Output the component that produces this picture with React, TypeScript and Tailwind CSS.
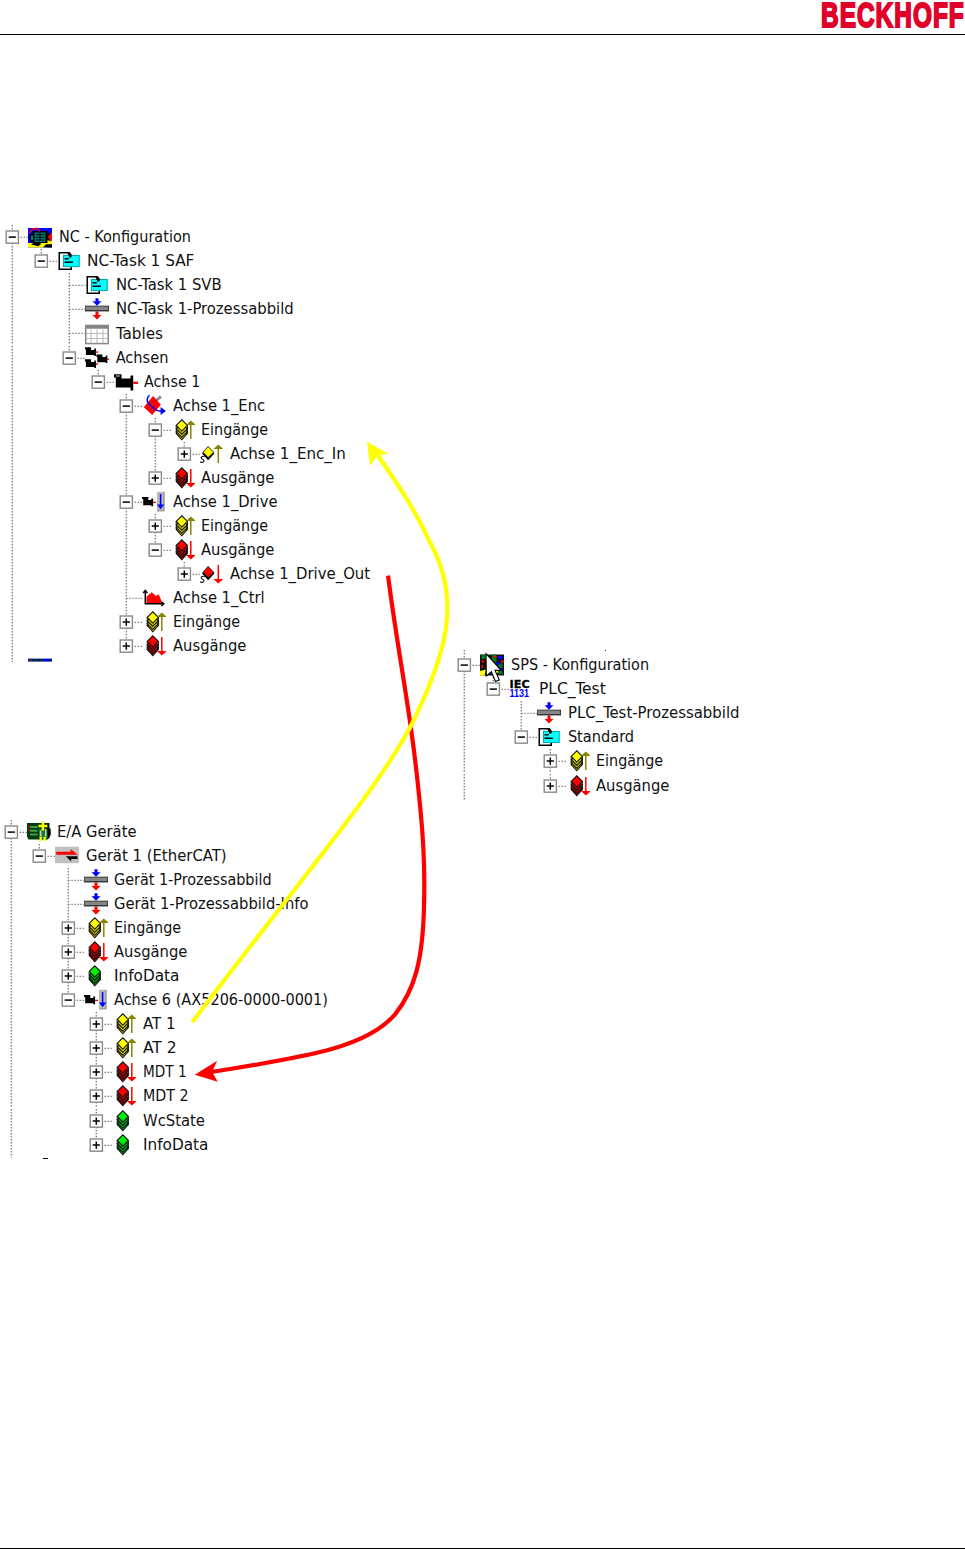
import { useLayoutEffect, useRef, useState } from "react";
import type { ReactNode } from "react";

type IconName =
  | "nc" | "sps" | "io" | "task" | "image" | "table" | "axes" | "axis" | "enc"
  | "in" | "out" | "info" | "varIn" | "varOut" | "drive" | "ctrl" | "iec" | "ecat";

type Row = { depth: number; icon: IconName; text: string; width: number; box?: "+" | "-" };

const NC: Row[] = [
  { depth: 0, box: "-", icon: "nc", text: "NC - Konfiguration", width: 132 },
  { depth: 1, box: "-", icon: "task", text: "NC-Task 1 SAF", width: 107 },
  { depth: 2, icon: "task", text: "NC-Task 1 SVB", width: 106 },
  { depth: 2, icon: "image", text: "NC-Task 1-Prozessabbild", width: 178 },
  { depth: 2, icon: "table", text: "Tables", width: 47 },
  { depth: 2, box: "-", icon: "axes", text: "Achsen", width: 53 },
  { depth: 3, box: "-", icon: "axis", text: "Achse 1", width: 56 },
  { depth: 4, box: "-", icon: "enc", text: "Achse 1_Enc", width: 92 },
  { depth: 5, box: "-", icon: "in", text: "Eingänge", width: 67 },
  { depth: 6, box: "+", icon: "varIn", text: "Achse 1_Enc_In", width: 116 },
  { depth: 5, box: "+", icon: "out", text: "Ausgänge", width: 73 },
  { depth: 4, box: "-", icon: "drive", text: "Achse 1_Drive", width: 104 },
  { depth: 5, box: "+", icon: "in", text: "Eingänge", width: 67 },
  { depth: 5, box: "-", icon: "out", text: "Ausgänge", width: 73 },
  { depth: 6, box: "+", icon: "varOut", text: "Achse 1_Drive_Out", width: 140 },
  { depth: 4, icon: "ctrl", text: "Achse 1_Ctrl", width: 92 },
  { depth: 4, box: "+", icon: "in", text: "Eingänge", width: 67 },
  { depth: 4, box: "+", icon: "out", text: "Ausgänge", width: 73 },
];

const SPS: Row[] = [
  { depth: 0, box: "-", icon: "sps", text: "SPS - Konfiguration", width: 138 },
  { depth: 1, box: "-", icon: "iec", text: "PLC_Test", width: 67 },
  { depth: 2, icon: "image", text: "PLC_Test-Prozessabbild", width: 172 },
  { depth: 2, box: "-", icon: "task", text: "Standard", width: 66 },
  { depth: 3, box: "+", icon: "in", text: "Eingänge", width: 67 },
  { depth: 3, box: "+", icon: "out", text: "Ausgänge", width: 73 },
];

const IO: Row[] = [
  { depth: 0, box: "-", icon: "io", text: "E/A Geräte", width: 80 },
  { depth: 1, box: "-", icon: "ecat", text: "Gerät 1 (EtherCAT)", width: 141 },
  { depth: 2, icon: "image", text: "Gerät 1-Prozessabbild", width: 158 },
  { depth: 2, icon: "image", text: "Gerät 1-Prozessabbild-Info", width: 194 },
  { depth: 2, box: "+", icon: "in", text: "Eingänge", width: 67 },
  { depth: 2, box: "+", icon: "out", text: "Ausgänge", width: 73 },
  { depth: 2, box: "+", icon: "info", text: "InfoData", width: 65 },
  { depth: 2, box: "-", icon: "drive", text: "Achse 6 (AX5206-0000-0001)", width: 214 },
  { depth: 3, box: "+", icon: "in", text: "AT 1", width: 32 },
  { depth: 3, box: "+", icon: "in", text: "AT 2", width: 33 },
  { depth: 3, box: "+", icon: "out", text: "MDT 1", width: 44 },
  { depth: 3, box: "+", icon: "out", text: "MDT 2", width: 46 },
  { depth: 3, box: "+", icon: "info", text: "WcState", width: 62 },
  { depth: 3, box: "+", icon: "info", text: "InfoData", width: 65 },
];

/* Text condensed horizontally to a given width. */
function Fit({ width, className, children }: { width: number; className: string; children: string }) {
  const ref = useRef<HTMLSpanElement>(null);
  const [scale, setScale] = useState(1);
  useLayoutEffect(() => {
    if (ref.current) setScale(width / ref.current.offsetWidth);
  }, [width]);
  return (
    <span ref={ref} className={`inline-block shrink-0 origin-left whitespace-nowrap ${className}`} style={{ transform: `scaleX(${scale})` }}>
      {children}
    </span>
  );
}

function Stack({ top, low }: { top: string; low: string }) {
  return (
    <g stroke="#111" strokeWidth="0.7">
      <path d="M3.5 10.4 7.2 7l3.7 3.4-3.7 4.1z" fill={low} />
      <path d="M3.5 9.2 7.2 6l3.7 3.2-3.7 3.7z" fill={low} />
      <path d="M3.5 7.2 7.2 4l3.7 3.2-3.7 3.7z" fill={low} />
      <path d="M3.500 4.900 7.200 1.200l3.700 3.700-3.700 3.800z" fill={top} />
      <path d="M3.500 4.900v5.500M10.900 4.900v5.500" />
    </g>
  );
}

function Motor({ x, y }: { x: number; y: number }) {
  return (
    <g transform={`translate(${x} ${y})`}>
      <path d="M0 0h4v1.800h2.200V.8h1.100v5h-1.100v-.6H.6V1.600H0z" fill="#000" />
      <path d="M7.2 2.8h1.600v.9H7.200z" fill="#f00" />
    </g>
  );
}

const UpArrow = ({ x }: { x: number }) => (
  <path d={`M${x} 14V3M${x - 2} 4.2 ${x} 2.4l2 1.8z`} stroke="#8a8500" fill="#8a8500" strokeWidth="1" />
);
const DownArrow = ({ x }: { x: number }) => (
  <path d={`M${x} 2v11M${x - 2} 11.8 ${x} 13.6l2-1.8z`} stroke="#f00" fill="#f00" strokeWidth="1" />
);

function Variable({ fill }: { fill: string }) {
  return (
    <>
      <path d="M1.400 7.600 5.400 3 9.600 7.600 5.400 12.200z" fill="#000" />
      <path d="M2 6.800 5.400 3l3.700 3.800-3.700 3.600z" fill={fill} stroke="#222" strokeWidth=".6" />
      <path d="M3.200 9.800c-1.800-.9-3.400.9-1.500 1.700s.7 2.700-1.600 1.700" fill="none" stroke="#222" strokeWidth=".8" />
    </>
  );
}

const icons: Record<IconName, ReactNode> = {
  in: <><Stack top="#ff0" low="#c4bc00" /><UpArrow x={13.2} /></>,
  out: <><Stack top="#f00" low="#a80000" /><DownArrow x={13.2} /></>,
  info: <Stack top="#00f000" low="#00a010" />,
  varIn: <><Variable fill="#ff0" /><UpArrow x={12.2} /></>,
  varOut: <><Variable fill="#f00" /><DownArrow x={12.2} /></>,
  image: (
    <>
      <path d="M7 .8h2v2h2L8 5.8 5 2.8h2z" fill="#00f" />
      <path d="M7 9.600h2V12h2l-3 3-3-3h2z" fill="#f00" />
      <rect x="0" y="5.800" width="16" height="3.800" fill="#222" />
      <rect x=".3" y="6.300" width="15.200" height="2.500" fill="#868686" />
    </>
  ),
  task: (
    <>
      <path d="M9.500 13.500h-8v-11h6l2 2v9z" fill="#fff" stroke="#000" strokeWidth="1" />
      <rect x="4.300" y="4.300" width="10.500" height="7.400" fill="#0ff" stroke="#0aa" strokeWidth=".7" />
      <path d="M6.600 2h1.900l1.400 2v1.200l-1.400.9-.7-1.600zM5 6h2.800v1H5zM5 8.300h5.600v1H5z" fill="#000" />
    </>
  ),
  table: (
    <>
      <rect x=".500" y="2.400" width="15" height="12" fill="#fff" stroke="#888" />
      <path d="M0 1.900h16v2.600H0z" fill="#858585" />
      <path d="M1 7.600h14M1 11h14M4 5v9M8 5v9M12 5v9" stroke="#bbb" strokeWidth=".7" />
    </>
  ),
  axes: <><Motor x={0} y={0.8} /><Motor x={7.6} y={5.6} /><Motor x={0} y={8.8} /></>,
  axis: (
    <>
      <path d="M0 2.800h5v2.800h6V3.600h1.800v10H11v-2H1.200V5H0z" fill="#000" />
      <path d="M12.800 7.800H16v1.500h-3.200z" fill="#f00" />
      <path d="M1.400 4h2.400" stroke="#fff" strokeWidth=".6" />
    </>
  ),
  enc: (
    <>
      <path d="M9 4.600 12.600 1.800" stroke="#888" strokeWidth="1.900" />
      <path d="M1.200 8.800 7.400 1.400 12.600 7.200 6.800 14z" fill="#f00" />
      <path d="M5 .8Q2 3.600 4.600 6.400T9 10.400t4 .8" fill="none" stroke="#00f" strokeWidth="1" />
      <path d="m12.400 8.600 3.600 2.700-3.600 2.700z" fill="#00f" />
    </>
  ),
  drive: (
    <>
      <path d="M0 4.600h4.200v2h2v-.9h1.200v5.100H6.200v-.7H.8V6H0z" fill="#000" />
      <path d="M7.400 7.800h2v.9h-2z" fill="#f00" />
      <path d="M10 1.200h5v13h-5z" fill="#b8b8b8" />
      <path d="M14.400 1.200h.6v13h-5v-.6h4.400z" fill="#888" />
      <path d="M12.400 2.600v8.600M11 10.200h2.800l-1.400 1.800z" stroke="#00f" fill="#00f" strokeWidth="1" />
    </>
  ),
  ctrl: (
    <>
      <path d="M3 11.400V7.200l3.500-3 2.800 2.400 1.800-1.100L13 10v1.400z" fill="#f00" />
      <path d="M2.200 3.400v8.500h12M.8 4.600l1.400-1.700 1.400 1.700M13 10.500l1.500 1.400-1.500 1.400" fill="none" stroke="#000" strokeWidth="1" />
    </>
  ),
  iec: (
    <>
      <text x=".4" y="7.200" fontSize="7.200" fontWeight="900" textLength="13.400" lengthAdjust="spacingAndGlyphs" fontFamily="DejaVu Sans, sans-serif" fill="#000" stroke="#000" strokeWidth=".2">IEC</text>
      <text x=".4" y="13.600" fontSize="6.800" fontWeight="700" textLength="13" lengthAdjust="spacingAndGlyphs" fontFamily="Liberation Sans, sans-serif" fill="#00f">1131</text>
    </>
  ),
  ecat: (
    <>
      <path d="M0 1.800h16v11H0z" fill="#c0c0c0" />
      <path d="M.8 5.200h9.600V3.400l4.800 3.700H.8z" fill="#f00" />
      <path d="M15 8.200H7.200l3.600 3.500v-1.700H15z" fill="#000" />
    </>
  ),
  nc: (
    <>
      <path d="M0 2h16v13H0z" fill="#00f" />
      <path d="M0 12h4l3-1 3 1 3-2h3v3l-4 2H0z" fill="#ff0" />
      <path d="m2 13 3-2 4 1.400-2 1.800zM10 14.800l2-2h4v2.200z" fill="#000" />
      <path d="M1 6h2V4h10v2l2-1v6l-2-1v2H3l-2-2z" fill="#000" />
      <path d="M2 7h1.400v3H2zM4.400 5h7.200v6.400H4.400z" fill="#087878" />
      <path d="M5 6.400h6M5 8.200h6M5 10h6M8 5v6" stroke="#000" strokeWidth=".6" />
      <path d="M1 5.400 2.600 3 6 2.200l2 2" fill="none" stroke="#f00" />
      <path d="m16 5-3 3 3 3z" fill="#f00" />
    </>
  ),
  sps: (
    <>
      <path d="M0 1h16v14H0z" fill="#111" />
      <path d="M1 1h3v3H1zM8 1h3v5H8zM12 7h3v3h-3zM7 11h3v3H7zM12 12h3v2h-3z" fill="#087820" />
      <path d="M12 2h3v2h-3zM11 6h2v2h-2zM13 10h2v2h-2z" fill="#00f" />
      <path d="M1 5h2v1.400H1zM9 2h2v1H9zM14 5h2v1.400h-2zM10 9h2v1h-2zM1 8h1v2H1z" fill="#f00" />
      <path d="m0 12 4-1-1 4H0zM9 12h3v1.200H9z" fill="#ff0" />
    </>
  ),
  io: (
    <>
      <path d="M0 2h15v10l-2 1H1L0 11z" fill="#063c10" />
      <path d="M2 4h5v1.300H2zM2 6.500h5v1.300H2zM2 9h5v1.300H2z" fill="#3aa045" />
      <path d="M1 3.600h1v1H1zM1 6.200h1v1H1z" fill="#f00" />
      <path d="M8 6h6v7H8z" fill="#19782a" />
      <path d="M8.600 7h1v4h-1zM12 6h1v5h-1z" fill="#ccc" />
      <path d="M13.400 2h1v3l1.400 1v4l-2 3z" fill="#000" />
      <path d="M9.800 1h1.600v2.200h2.200v1.600h-2.200V7H9.800V4.800H7.600V3.200h2.200zM8.400 11.200h1.500V14H8.400zM11 11.200h1.500V14H11z" fill="#ff0" />
    </>
  ),
};

const DOTS = { stroke: "#868686", strokeWidth: 1.4, strokeDasharray: "1.5 1.5" };

function Guide({ line }: { line: boolean }) {
  return (
    <svg viewBox="0 0 28.6 24.05" className="h-[24.05px] w-[28.6px] shrink-0">
      {line && <path d="M12.3 0v24.05" {...DOTS} />}
    </svg>
  );
}

function Expander({ box, down }: { box?: "+" | "-"; down: boolean }) {
  return (
    <svg viewBox="0 0 28.6 24.05" className="h-[24.05px] w-[28.6px] shrink-0">
      <path d={down ? "M12.3 0v24.05" : "M12.3 0v12"} {...DOTS} />
      <path d={box ? "M20.5 12.4h8" : "M12.3 12.4h16"} {...DOTS} />
      {box && (
        <>
          <rect x="6.2" y="6" width="12.2" height="12.2" fill="#fff" stroke="#8a8a8a" strokeWidth="1.400" />
          <path d={box === "+" ? "M8.700 12.100h7.200M12.300 8.500v7.200" : "M8.700 12.100h7.200"} stroke="#000" strokeWidth="1.500" />
        </>
      )}
    </svg>
  );
}

function Tree({ rows }: { rows: Row[] }) {
  const continues = (i: number, level: number) => {
    if (level === 0) return true;
    for (const r of rows.slice(i + 1)) {
      if (r.depth === level) return true;
      if (r.depth < level) return false;
    }
    return false;
  };
  return (
    <ul className="flex flex-col">
      {rows.map((row, i) => (
        <li key={i} className="flex h-[24.05px] items-center">
          {Array.from({ length: row.depth }, (_, level) => (
            <Guide key={level} line={continues(i, level)} />
          ))}
          <Expander box={row.box} down={continues(i, row.depth)} />
          <svg viewBox="0 0 16 16" className="-ml-[0.6px] h-6 w-6 shrink-0">{icons[row.icon]}</svg>
          <Fit width={row.width} className="ml-[6.5px] font-['DejaVu_Sans_Condensed','DejaVu_Sans',sans-serif] text-[16.2px] leading-6 text-[#111]">
            {row.text}
          </Fit>
        </li>
      ))}
    </ul>
  );
}

export default function App() {
  return (
    <div className="relative flex h-[1549px] w-[965px] flex-col overflow-hidden border-b border-black bg-white">
      <header className="flex h-[35px] shrink-0 justify-end border-b border-black">
        <div className="h-[34px] w-[144px]">
          <Fit width={144} className="font-['Liberation_Sans',sans-serif] text-[34.5px] leading-[31px] font-bold tracking-[1.5px] text-[#e1002a] [-webkit-text-stroke:2px_#e1002a]">
            BECKHOFF
          </Fit>
        </div>
      </header>

      <main className="flex pt-[190.3px]">
        <div className="flex w-[452.2px] shrink-0 flex-col">
          <Tree rows={NC} />
          <div className="flex h-[4px] overflow-hidden">
            <Guide line />
            <svg viewBox="0 0 24 4" className="-ml-[0.6px] h-[4px] w-6 shrink-0">
              <path d="M0 .6h24v3H0z" fill="#001090" />
              <path d="M1 1h2v2H1zM5 1h4v2H5zM12 1h3v2h-3z" fill="#033" />
              <path d="M16 1h4v2h-4z" fill="#00f" />
              <path d="M2 2h2v1H2z" fill="#d00" />
            </svg>
          </div>
          <div className="mt-[157.8px] -ml-[1.3px] flex flex-col">
            <Tree rows={IO} />
            <div className="flex h-[2.5px] items-end overflow-hidden">
              <Guide line />
              <div className="ml-[15.7px] h-[1.5px] w-[5px] shrink-0 bg-black" />
            </div>
          </div>
        </div>

        <div className="flex flex-col pt-[424.7px]">
          <div className="flex h-[3.3px] justify-between overflow-hidden">
            <Guide line />
            <span className="mr-[129px] h-[1.5px] w-[1.5px] bg-[#333]" />
          </div>
          <Tree rows={SPS} />
          <div className="h-[2px] overflow-hidden"><Guide line /></div>
        </div>
      </main>

      <svg viewBox="0 0 965 1549" className="pointer-events-none absolute inset-0 h-full w-full" fill="none">
        <path d="M388 576C396 640 408 700 415 760C424 835 425 870 424 905C423 960 415 990 395 1015C365 1050 300 1058 210 1073" stroke="#f00" strokeWidth="4.2" />
        <path d="m194.500 1075.500 22.500-14-5 11 5.500 10z" fill="#f00" />
        <path d="M192 1023C300 880 370 800 409 730C447 655 462 600 430 543C415 510 400 488 376 453" stroke="#ff0" strokeWidth="4.200" />
        <path d="m367 442 21 12-10.500 2-7.500 10z" fill="#ff0" />
        <path d="m486 654 .3 22.500 5-4.500 4.200 10 3.800-1.600-4.300-9.600 6-.3z" fill="#fff" stroke="#000" strokeWidth="1.100" />
      </svg>
    </div>
  );
}
